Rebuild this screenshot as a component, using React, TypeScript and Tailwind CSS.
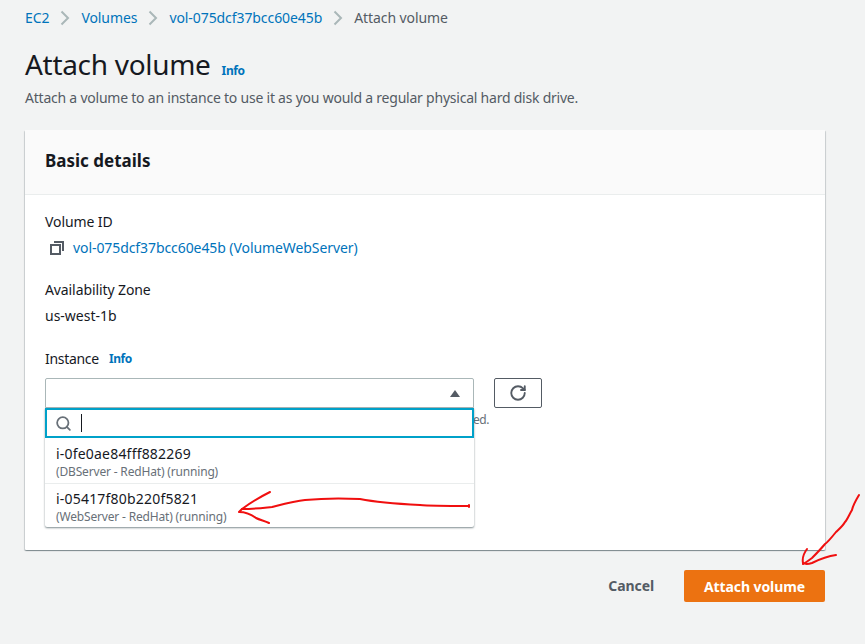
import { RotateCw, Search } from "lucide-react"

function Crumb({ label }: { label: string }) {
  return (
    <>
      <a className="text-[#0073bb]">{label}</a>
      <svg className="mx-[11px] text-[#aab7b8]" width="10" height="16" viewBox="0 0 10 16" fill="none" stroke="currentColor" strokeWidth="2">
        <path d="M1.5 1.5 L8 8 L1.5 14.5" />
      </svg>
    </>
  )
}

function Option({ id, name, last }: { id: string; name: string; last?: boolean }) {
  return (
    <div className={`px-[11px] ${last ? "h-[43px] pt-[5px]" : "h-[46px] border-b border-[#eaeded] pt-[6px]"}`}>
      <p className="text-[14px] leading-[20px] tracking-[0.2px] text-[#16191f]">{id}</p>
      <p className="text-[12px] leading-[15px] tracking-[-0.17px] text-[#687078]">{name}</p>
    </div>
  )
}

export default function App() {
  return (
    <div
      className="relative h-[644px] w-[865px] overflow-hidden bg-[#f2f3f3] px-[25px] pt-[8px] text-[#16191f]"
      style={{ fontFamily: '"Noto Sans", "Liberation Sans", sans-serif' }}
    >
      <nav className="flex h-[20px] items-center text-[14px] leading-[20px] tracking-[-0.08px]">
        <Crumb label="EC2" />
        <Crumb label="Volumes" />
        <Crumb label="vol-075dcf37bcc60e45b" />
        <span className="text-[#545b64]">Attach volume</span>
      </nav>

      <div className="mt-[17px] flex items-baseline gap-[11px]">
        <h1 className="text-[28px] leading-[38px] tracking-[-0.3px]">Attach volume</h1>
        <a className="text-[12px] font-bold tracking-[-0.4px] text-[#0073bb]">Info</a>
      </div>
      <p className="mt-[5px] text-[14px] leading-[20px] tracking-[-0.225px] text-[#545b64]">
        Attach a volume to an instance to use it as you would a regular physical hard disk drive.
      </p>

      <section className="mt-[22px] h-[420px] w-[800px] rounded-[1px] bg-white shadow-[0_1px_1px_0_rgba(0,28,36,0.3),1px_1px_1px_0_rgba(0,28,36,0.15),-1px_1px_1px_0_rgba(0,28,36,0.15)]">
        <header className="flex h-[65px] items-center border-b border-[#eaeded] bg-[#fafafa] px-[20px] pb-[2px]">
          <h2 className="text-[17px] font-bold leading-[22px]">Basic details</h2>
        </header>

        <div className="px-[20px] pt-[17px]">
          <label className="block text-[14px] leading-[20px] tracking-[-0.1px]">Volume ID</label>
          <div className="mt-[6px] flex h-[20px] items-center">
            <svg className="ml-[5px] mr-[9px]" width="14" height="14" viewBox="0 0 14 14" fill="none" stroke="#545b64" strokeWidth="2">
              <rect x="1" y="4" width="9" height="9" />
              <path d="M4 1 H13 V10" />
            </svg>
            <a className="text-[14px] leading-[20px] tracking-[-0.08px] text-[#0073bb]">vol-075dcf37bcc60e45b (VolumeWebServer)</a>
          </div>

          <label className="mt-[22px] block text-[14px] leading-[20px] tracking-[-0.1px]">Availability Zone</label>
          <p className="mt-[6px] text-[14px] leading-[20px]">us-west-1b</p>

          <div className="mt-[22px] flex h-[20px] items-center gap-[10px] text-[14px]">
            <label className="tracking-[-0.3px]">Instance</label>
            <a className="pt-[2px] text-[12px] font-bold tracking-[-0.4px] text-[#0073bb]">Info</a>
          </div>

          <div className="mt-[10px] flex items-start gap-[20px]">
            <div className="relative w-[429px]">
              <div className="flex h-[30px] items-center justify-end rounded-t-[2px] border border-[#aab7b8] bg-white pr-[13px]">
                <span className="h-0 w-0 border-x-[5px] border-b-[7px] border-x-transparent border-b-[#545b64]" />
              </div>
              <p className="mt-[2px] flex h-[20px] w-[444px] items-center justify-end whitespace-nowrap text-[12px] tracking-[-0.45px] text-[#687078]">
                Only instances in the same Availability Zone as the selected volume are displayed.
              </p>

              {/* dropdown sits on top of the helper text */}
              <div className="absolute left-0 top-[30px] w-[429px] rounded-b-[2px] bg-white shadow-[0_1px_2px_0_rgba(0,28,36,0.5)]">
                <div className="flex h-[30px] items-center border-2 border-[#00a1c9] bg-white pl-[8px]">
                  <Search className="h-[17px] w-[17px] text-[#687078]" strokeWidth={2.5} />
                  <span className="ml-[9px] h-[18px] w-px bg-[#16191f]" />
                </div>
                <Option id="i-0fe0ae84fff882269" name="(DBServer - RedHat) (running)" />
                <Option id="i-05417f80b220f5821" name="(WebServer - RedHat) (running)" last />
              </div>
            </div>

            <button className="flex h-[30px] w-[48px] items-center justify-center rounded-[2px] border border-[#545b64] bg-white text-[#545b64]">
              <RotateCw className="h-[18px] w-[18px]" strokeWidth={2.5} />
            </button>
          </div>
        </div>
      </section>

      <div className="mt-[20px] flex w-[800px] items-center justify-end gap-[30px]">
        <button className="text-[14px] font-bold leading-[20px] tracking-[-0.1px] text-[#545b64]">Cancel</button>
        <button className="flex h-[32px] w-[141px] items-center justify-center rounded-[2px] bg-[#ec7211] text-[14px] font-bold tracking-[-0.1px] text-white">
          Attach volume
        </button>
      </div>

      {/* hand drawn red annotations over the screenshot */}
      <svg className="pointer-events-none absolute left-0 top-0" width="865" height="644" fill="none" stroke="#f00f0f" strokeWidth="2" strokeLinecap="round" strokeLinejoin="round">
        <path d="M469 505 L469 507 M469 506 C455 506 430 506 420 505 C400 504 380 503 360 499 C340 498 315 499 305 500 C295 501 280 505 272 507 C262 508 255 509 242 509" />
        <path d="M270 492 C262 496 250 503 242 509 L239 512 C246 512 252 515 256 518 C260 520 265 521 269 523" />
        <path d="M859 495 C856 500 853 505 852 510 C849 515 847 520 845 522 C843 526 838 530 836 532 C832 537 828 542 825 544 C820 550 815 555 812 558 C808 561 805 563 803 564 M807 549 C804 553 802 558 803 563 C806 565 809 564 812 563 C820 559 828 556 836 555" />
      </svg>
    </div>
  )
}
